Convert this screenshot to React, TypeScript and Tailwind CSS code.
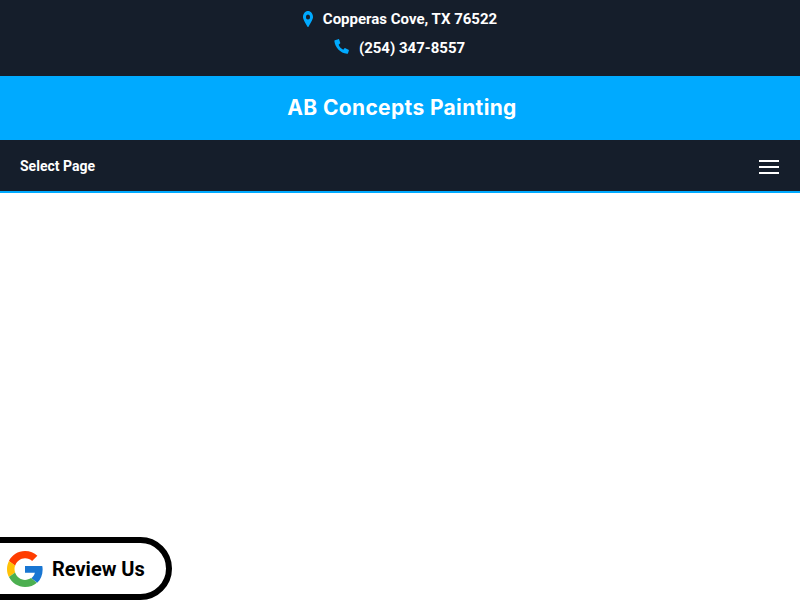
import React from "react";

function Pin() {
  return (
    <svg width="10" height="16" viewBox="0 0 384 512" fill="#00aaff" preserveAspectRatio="none">
      <path d="M172.3 501.7C27 291 0 248 0 192 0 86 86 0 192 0s192 86 192 192c0 56-27 99-172.3 309.7-9.5 13.8-29.9 13.8-39.4 0zM192 272a80 80 0 1 0 0-160 80 80 0 0 0 0 160z" />
    </svg>
  );
}

function Phone() {
  return (
    <svg width="15" height="15" viewBox="0 0 24 24" fill="#00aaff">
      <path d="M1.500 1.800 L6.800 0.200 C7.400 0 8 0.300 8.200 0.800 L10 6 C10.200 6.500 10 7 9.600 7.300 L7.400 9 C8.600 12.200 11.600 15.400 14.800 17 L16.800 14.900 C17.200 14.500 17.700 14.400 18.200 14.600 L23.200 17 C23.800 17.300 24 17.800 23.800 18.400 L22.400 22.600 C22.200 23.300 21.600 23.700 20.900 23.600 C10 22.400 1.400 13 0.600 3 C0.500 2.500 0.900 2 1.500 1.800 Z" />
    </svg>
  );
}

function GoogleG() {
  return (
    <svg width="36" height="36" viewBox="0 0 48 48">
      <path fill="#FF3D00" d="M24 9.500c3.900 0 7 1.400 9.500 3.700l7-7C36.200 2.400 30.600 0 24 0 14.600 0 6.500 5.400 2.600 13.200l8.200 6.400C12.700 13.700 17.900 9.500 24 9.500z" />
      <path fill="#1976D2" d="M47.500 24.500c0-1.600-.2-3.300-.5-4.500H24v9.100h13.200c-.6 3-2.300 5.500-4.800 7.200l7.900 6.100c4.600-4.300 7.200-10.500 7.200-17.900z" />
      <path fill="#FFC107" d="M10.800 28.700c-.5-1.500-.8-3-.8-4.700s.3-3.200.8-4.700l-8.200-6.100C.9 16.500 0 20.100 0 24s.9 7.500 2.600 10.800l8.200-6.100z" />
      <path fill="#4CAF50" d="M24 48c6.500 0 11.900-2.100 15.900-5.800L32 36.100c-2.200 1.500-4.900 2.400-8 2.400-6.100 0-11.300-4.100-13.200-9.800l-8.200 6.100C6.500 42.600 14.600 48 24 48z" />
    </svg>
  );
}

export default function App() {
  return (
    <div className="relative h-[600px] w-full overflow-hidden bg-white font-['Roboto',sans-serif]">
      <header>
        <div className="flex h-[76px] flex-col items-center bg-[#151e2b] pt-[5px] text-[15px] font-bold text-white">
          <div className="flex h-[29px] items-center">
            <span className="mr-[10px] -mt-[2px] flex"><Pin /></span>
            <span>Copperas Cove, TX 76522</span>
          </div>
          <div className="flex h-[29px] items-center pr-[1px]">
            <span className="mr-[10px] -mt-[5px] flex"><Phone /></span>
            <span>(254) 347-8557</span>
          </div>
        </div>
        <div className="flex h-16 items-center justify-center bg-[#00aaff] pl-1 text-white">
          <h1 className="font-['Inter',sans-serif] text-[21px] font-bold tracking-[0.35px]">AB Concepts Painting</h1>
        </div>
        <div className="flex h-[53px] items-center justify-between border-b-2 border-[#00aaff] bg-[#151e2b] pl-5 pr-[21px]">
          <span className="text-sm font-bold text-white">Select Page</span>
          <div className="flex w-5 flex-col gap-1 pt-[3px]">
            <div className="h-[2px] bg-white" />
            <div className="h-[2px] bg-white" />
            <div className="h-[2px] bg-white" />
          </div>
        </div>
      </header>
      <div className="absolute bottom-0 -left-2 flex h-[63px] w-[180px] items-center rounded-r-[32px] border-[6px] border-black bg-white pl-[9px]">
        <GoogleG />
        <span className="ml-[9px] text-xl font-bold text-black">Review Us</span>
      </div>
    </div>
  );
}
